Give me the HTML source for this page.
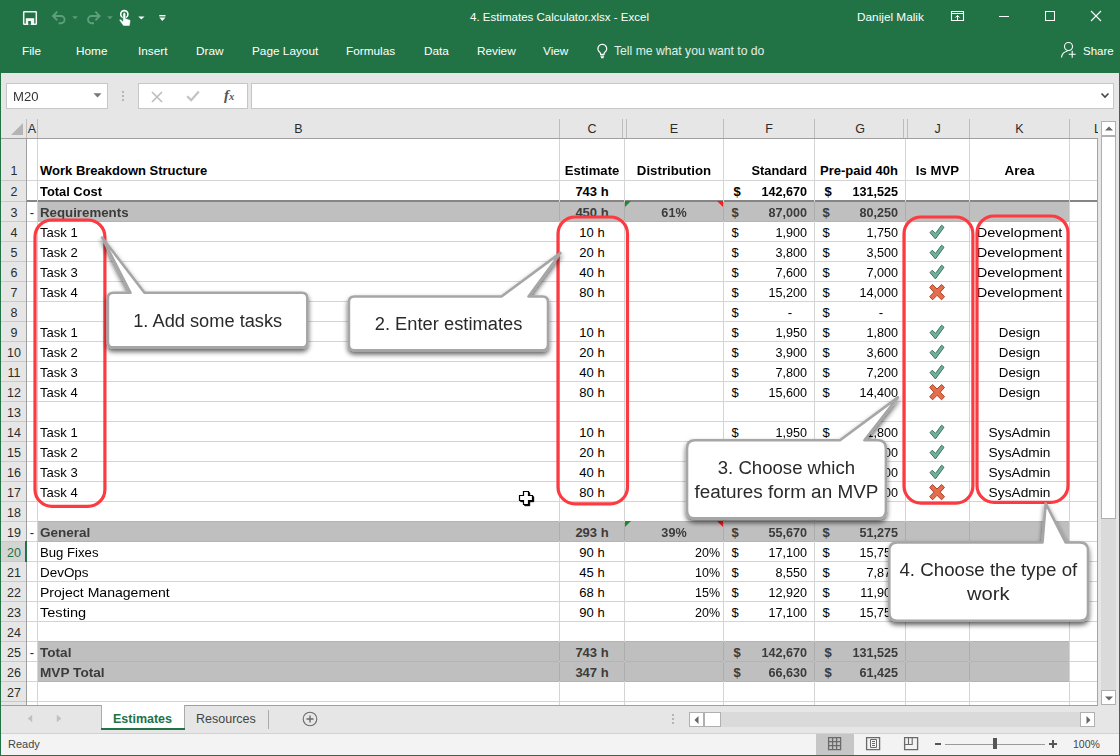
<!DOCTYPE html>
<html><head><meta charset="utf-8"><title>4. Estimates Calculator.xlsx - Excel</title>
<style>
html,body{margin:0;padding:0}
body{width:1120px;height:756px;overflow:hidden;position:relative;background:#fff;font-family:"Liberation Sans",sans-serif;color:#000}
#win{position:absolute;left:0;top:0;width:1120px;height:756px;overflow:hidden;background:#e6e6e6}
#win div,#win span,#win svg{position:absolute;white-space:nowrap}
.tb{color:#fff;font-size:11.8px;line-height:14px}
.c{font-size:13px;line-height:20px;height:20px}
.b{font-weight:bold}
.sh{color:#3b3b3b}
.rh{font-size:12.5px;line-height:20px;height:20px;color:#2b2b2b;text-align:center;left:1px;width:26px}
.ch{font-size:12.5px;line-height:20px;color:#2b2b2b;text-align:center;top:119px;height:20px}
.hl{height:1px;background:#d4d4d4;left:27px;width:1043px}
.vl{width:1px;background:#d4d4d4;top:139px;height:566px}
.red{border:2.8px solid #fb3d43;border-radius:13px;box-sizing:border-box}
.call{font-size:18px;line-height:24.2px;text-align:center;color:#2a2a2a}
</style></head><body><div id="win">

<div style="left:0;top:0;width:1120px;height:73px;background:#217346"></div>
<svg style="left:22px;top:10px" width="16" height="16" viewBox="22 10 16 16"><rect x="23.7" y="11.7" width="12.6" height="12.6" rx="0.6" fill="none" stroke="#f4f8f5" stroke-width="1.5"/><rect x="25.8" y="18.2" width="8.4" height="6.4" fill="#f4f8f5"/><rect x="28.2" y="21" width="2.7" height="3.8" fill="#217346"/></svg>
<svg style="left:50px;top:9px" width="18" height="17" viewBox="50 9 18 17"><path d="M57.2 11.6 L53 16 L57.2 20.4 M53.4 16 H61 a3.6 3.6 0 0 1 0 7.2 H58.6" fill="none" stroke="#5f9f7e" stroke-width="1.9"/></svg>
<svg style="left:85px;top:9px" width="18" height="17" viewBox="85 9 18 17"><path d="M95.4 11.6 L99.6 16 L95.4 20.4 M99.2 16 H91.6 a3.6 3.6 0 0 0 0 7.2 H94" fill="none" stroke="#5f9f7e" stroke-width="1.9"/></svg>
<svg style="left:71px;top:15px" width="8" height="5" viewBox="0 0 8 5"><path d="M1.2 1.2h5.6L4 4.2z" fill="#5d9a79"/></svg>
<svg style="left:106px;top:15px" width="8" height="5" viewBox="0 0 8 5"><path d="M1.2 1.2h5.6L4 4.2z" fill="#5d9a79"/></svg>
<svg style="left:116px;top:8px" width="17" height="20" viewBox="116 8 17 20"><circle cx="124.3" cy="14.2" r="3.6" fill="none" stroke="#fff" stroke-width="1.6"/><path d="M122.9 14 a1.4 1.4 0 0 1 2.8 0 V18.4 l3.6 1 c1 .4 1.3 1 1.1 2 L129.8 26 H123.4 L119.4 20.6 c-.5-1 .7-1.9 1.6-1 L122.9 21.2z" fill="#fff" stroke="#217346" stroke-width=".5"/></svg>
<svg style="left:138px;top:15.6px" width="7" height="4" viewBox="0 0 7 4"><path d="M0.3 0.4h6.2L3.4 3.6z" fill="#fff"/></svg>
<svg style="left:159px;top:14px" width="7" height="8" viewBox="0 0 7 8"><path d="M0.3 1.7h6.2" stroke="#fff" stroke-width="1.4"/><path d="M0.3 3.6h6.2L3.4 7z" fill="#fff"/></svg>

<div class="tb" style="left:0;width:1119px;text-align:center;top:10px;font-size:11.5px">4. Estimates Calculator.xlsx - Excel</div>
<div class="tb" style="left:857px;top:10px">Danijel Malik</div>
<svg style="left:950px;top:10px" width="16" height="13" viewBox="950 10 16 13"><path d="M951.5 11.5h12v9h-12z M951.5 13.5h12" fill="none" stroke="#fff" stroke-width="1.1"/><path d="M957.5 20.5v-5 M955.3 17.6l2.2-2.2l2.2 2.2" fill="none" stroke="#fff" stroke-width="1"/></svg>
<div style="left:999px;top:16px;width:10px;height:1px;background:#fff"></div>
<div style="left:1045px;top:11px;width:8px;height:8px;border:1px solid #fff;box-sizing:content-box"></div>
<svg style="left:1090px;top:10px" width="12" height="12" viewBox="0 0 12 12"><path d="M1 1L11 11M11 1L1 11" stroke="#fff" stroke-width="1.1"/></svg>

<div class="tb" style="left:22px;top:44px">File</div>
<div class="tb" style="left:76px;top:44px">Home</div>
<div class="tb" style="left:138px;top:44px">Insert</div>
<div class="tb" style="left:196px;top:44px">Draw</div>
<div class="tb" style="left:252px;top:44px">Page Layout</div>
<div class="tb" style="left:346px;top:44px">Formulas</div>
<div class="tb" style="left:424px;top:44px">Data</div>
<div class="tb" style="left:477px;top:44px">Review</div>
<div class="tb" style="left:543px;top:44px">View</div>
<svg style="left:596px;top:42px" width="13" height="17" viewBox="596 42 13 17"><path d="M602.3 44.2 a4.4 4.4 0 0 1 2.5 8 c-.6.5-.8 1.200-.8 2.200 H600.6 c0-1-.2-1.700-.8-2.200 A4.400 4.400 0 0 1 602.300 44.200z M600.5 56.100h3.600 M601 57.600h2.600" fill="none" stroke="#fff" stroke-width="1.15"/></svg>
<div class="tb" style="left:614px;top:44px;color:#e4efe8;font-size:12.2px">Tell me what you want to do</div>
<svg style="left:1060px;top:41px" width="18" height="18" viewBox="0 0 18 18"><circle cx="8.5" cy="5.5" r="4" fill="none" stroke="#fff" stroke-width="1.1"/><path d="M1.5 16.5 c.5-4 3-6 6-6.3" fill="none" stroke="#fff" stroke-width="1.1"/><path d="M12.2 9.8v7M8.7 13.3h7" stroke="#fff" stroke-width="1.1"/></svg>
<div class="tb" style="left:1083px;top:44px;font-size:11.5px">Share</div>
<div style="left:6px;top:83px;width:100px;height:24px;background:#fff;border:1px solid #c6c6c6;box-sizing:content-box"></div>
<div style="left:13px;top:90px;font-size:12.5px;line-height:14px;color:#333;transform:scaleX(1.05);transform-origin:left center">M20</div>
<svg style="left:93px;top:93px" width="9" height="5" viewBox="0 0 9 5"><path d="M0.5 0.2h8L4.5 4.5z" fill="#777"/></svg>
<div style="left:122px;top:91px;width:2px;height:2px;background:#b5b5b5"></div>
<div style="left:122px;top:95px;width:2px;height:2px;background:#b5b5b5"></div>
<div style="left:122px;top:99px;width:2px;height:2px;background:#b5b5b5"></div>
<div style="left:138px;top:83px;width:108px;height:24px;background:#fff;border:1px solid #c6c6c6;box-sizing:content-box"></div>
<svg style="left:151px;top:90.5px" width="12" height="12" viewBox="0 0 12 12"><path d="M1 1L11 11M11 1L1 11" stroke="#bdbdbd" stroke-width="1.6"/></svg>
<svg style="left:186px;top:90px" width="14" height="12" viewBox="0 0 14 12"><path d="M1.2 6.200L5.200 10.200L12.800 1.500" stroke="#c2c2c2" stroke-width="2.2" fill="none"/></svg>
<div style="left:224px;top:87px;font-family:'Liberation Serif',serif;font-style:italic;font-weight:bold;font-size:15px;line-height:16px;color:#555">f<span style="position:static;font-size:10.5px;font-weight:bold">x</span></div>
<div style="left:251px;top:83px;width:861px;height:24px;background:#fff;border:1px solid #c6c6c6;box-sizing:content-box"></div>
<svg style="left:1100px;top:92px" width="10" height="7" viewBox="0 0 10 7"><path d="M1.5 1.5L5 5L8.5 1.5" stroke="#444" stroke-width="1.6" fill="none"/></svg>
<div style="left:27px;top:139px;width:1071px;height:566px;background:#fff"></div>
<div style="left:38px;top:202px;width:1032px;height:19px;background:#bfbfbf"></div>
<div style="left:38px;top:522px;width:1032px;height:19px;background:#bfbfbf"></div>
<div style="left:38px;top:642px;width:1032px;height:19px;background:#bfbfbf"></div>
<div style="left:38px;top:662px;width:1032px;height:19px;background:#bfbfbf"></div>
<div class="hl" style="top:180px;width:1071px"></div>
<div class="hl" style="top:201px;width:1071px"></div>
<div class="hl" style="top:221px;width:1071px"></div>
<div class="hl" style="top:241px;width:1071px"></div>
<div class="hl" style="top:261px;width:1071px"></div>
<div class="hl" style="top:281px;width:1071px"></div>
<div class="hl" style="top:301px;width:1071px"></div>
<div class="hl" style="top:321px;width:1071px"></div>
<div class="hl" style="top:341px;width:1071px"></div>
<div class="hl" style="top:361px;width:1071px"></div>
<div class="hl" style="top:381px;width:1071px"></div>
<div class="hl" style="top:401px;width:1071px"></div>
<div class="hl" style="top:421px;width:1071px"></div>
<div class="hl" style="top:441px;width:1071px"></div>
<div class="hl" style="top:461px;width:1071px"></div>
<div class="hl" style="top:481px;width:1071px"></div>
<div class="hl" style="top:501px;width:1071px"></div>
<div class="hl" style="top:521px;width:1071px"></div>
<div class="hl" style="top:541px;width:1071px"></div>
<div class="hl" style="top:561px;width:1071px"></div>
<div class="hl" style="top:581px;width:1071px"></div>
<div class="hl" style="top:601px;width:1071px"></div>
<div class="hl" style="top:621px;width:1071px"></div>
<div class="hl" style="top:641px;width:1071px"></div>
<div class="hl" style="top:661px;width:1071px"></div>
<div class="hl" style="top:681px;width:1071px"></div>
<div class="hl" style="top:701px;width:1071px"></div>
<div style="left:38px;top:221px;width:1032px;height:1px;background:#b4b4b4"></div>
<div style="left:38px;top:541px;width:1032px;height:1px;background:#b4b4b4"></div>
<div style="left:38px;top:661px;width:1032px;height:1px;background:#b4b4b4"></div>
<div style="left:38px;top:681px;width:1032px;height:1px;background:#b4b4b4"></div>
<div style="left:38px;top:521px;width:1032px;height:1px;background:#b4b4b4"></div>
<div style="left:38px;top:641px;width:1032px;height:1px;background:#b4b4b4"></div>
<div style="left:27px;top:200px;width:1071px;height:2px;background:#858585"></div>
<div class="vl" style="left:37px"></div>
<div class="vl" style="left:559px"></div>
<div class="vl" style="left:624px"></div>
<div class="vl" style="left:723px"></div>
<div class="vl" style="left:814px"></div>
<div class="vl" style="left:905px"></div>
<div class="vl" style="left:969px"></div>
<div class="vl" style="left:1069px"></div>
<div style="left:559px;top:202px;width:1px;height:19px;background:#adadad"></div>
<div style="left:624px;top:202px;width:1px;height:19px;background:#adadad"></div>
<div style="left:723px;top:202px;width:1px;height:19px;background:#adadad"></div>
<div style="left:814px;top:202px;width:1px;height:19px;background:#adadad"></div>
<div style="left:905px;top:202px;width:1px;height:19px;background:#adadad"></div>
<div style="left:969px;top:202px;width:1px;height:19px;background:#adadad"></div>
<div style="left:559px;top:522px;width:1px;height:19px;background:#adadad"></div>
<div style="left:624px;top:522px;width:1px;height:19px;background:#adadad"></div>
<div style="left:723px;top:522px;width:1px;height:19px;background:#adadad"></div>
<div style="left:814px;top:522px;width:1px;height:19px;background:#adadad"></div>
<div style="left:905px;top:522px;width:1px;height:19px;background:#adadad"></div>
<div style="left:969px;top:522px;width:1px;height:19px;background:#adadad"></div>
<div style="left:559px;top:642px;width:1px;height:19px;background:#adadad"></div>
<div style="left:624px;top:642px;width:1px;height:19px;background:#adadad"></div>
<div style="left:723px;top:642px;width:1px;height:19px;background:#adadad"></div>
<div style="left:814px;top:642px;width:1px;height:19px;background:#adadad"></div>
<div style="left:905px;top:642px;width:1px;height:19px;background:#adadad"></div>
<div style="left:969px;top:642px;width:1px;height:19px;background:#adadad"></div>
<div style="left:559px;top:662px;width:1px;height:19px;background:#adadad"></div>
<div style="left:624px;top:662px;width:1px;height:19px;background:#adadad"></div>
<div style="left:723px;top:662px;width:1px;height:19px;background:#adadad"></div>
<div style="left:814px;top:662px;width:1px;height:19px;background:#adadad"></div>
<div style="left:905px;top:662px;width:1px;height:19px;background:#adadad"></div>
<div style="left:969px;top:662px;width:1px;height:19px;background:#adadad"></div>
<div style="left:1px;top:117px;width:1097px;height:21px;background:#e6e6e6"></div>
<div style="left:1px;top:138px;width:1097px;height:1px;background:#9f9f9f"></div>
<svg style="left:11px;top:123px" width="12" height="12" viewBox="0 0 12 12"><path d="M12 0V12H0z" fill="#b4b4b4"/></svg>
<div style="left:26px;top:119px;width:1px;height:19px;background:#bdbdbd"></div>
<div style="left:37px;top:119px;width:1px;height:19px;background:#bdbdbd"></div>
<div style="left:559px;top:119px;width:1px;height:19px;background:#bdbdbd"></div>
<div style="left:622px;top:119px;width:1px;height:19px;background:#bdbdbd"></div>
<div style="left:626px;top:119px;width:1px;height:19px;background:#bdbdbd"></div>
<div style="left:723px;top:119px;width:1px;height:19px;background:#bdbdbd"></div>
<div style="left:814px;top:119px;width:1px;height:19px;background:#bdbdbd"></div>
<div style="left:903px;top:119px;width:1px;height:19px;background:#bdbdbd"></div>
<div style="left:907px;top:119px;width:1px;height:19px;background:#bdbdbd"></div>
<div style="left:969px;top:119px;width:1px;height:19px;background:#bdbdbd"></div>
<div style="left:1069px;top:119px;width:1px;height:19px;background:#bdbdbd"></div>
<div class="ch" style="left:27px;width:10px">A</div>
<div class="ch" style="left:38px;width:521px">B</div>
<div class="ch" style="left:560px;width:64px">C</div>
<div class="ch" style="left:625px;width:98px">E</div>
<div class="ch" style="left:724px;width:90px">F</div>
<div class="ch" style="left:815px;width:90px">G</div>
<div class="ch" style="left:906px;width:63px">J</div>
<div class="ch" style="left:970px;width:99px">K</div>
<div class="ch" style="left:1094px;width:4px;overflow:hidden;text-align:left">L</div>
<div style="left:1px;top:139px;width:25px;height:566px;background:#e6e6e6"></div>
<div style="left:26px;top:139px;width:1px;height:566px;background:#9f9f9f"></div>
<div style="left:1px;top:180px;width:25px;height:1px;background:#c9c9c9"></div>
<div class="rh" style="top:161px">1</div>
<div style="left:1px;top:201px;width:25px;height:1px;background:#c9c9c9"></div>
<div class="rh" style="top:182px">2</div>
<div style="left:1px;top:221px;width:25px;height:1px;background:#c9c9c9"></div>
<div class="rh" style="top:203px">3</div>
<div style="left:1px;top:241px;width:25px;height:1px;background:#c9c9c9"></div>
<div class="rh" style="top:223px">4</div>
<div style="left:1px;top:261px;width:25px;height:1px;background:#c9c9c9"></div>
<div class="rh" style="top:243px">5</div>
<div style="left:1px;top:281px;width:25px;height:1px;background:#c9c9c9"></div>
<div class="rh" style="top:263px">6</div>
<div style="left:1px;top:301px;width:25px;height:1px;background:#c9c9c9"></div>
<div class="rh" style="top:283px">7</div>
<div style="left:1px;top:321px;width:25px;height:1px;background:#c9c9c9"></div>
<div class="rh" style="top:303px">8</div>
<div style="left:1px;top:341px;width:25px;height:1px;background:#c9c9c9"></div>
<div class="rh" style="top:323px">9</div>
<div style="left:1px;top:361px;width:25px;height:1px;background:#c9c9c9"></div>
<div class="rh" style="top:343px">10</div>
<div style="left:1px;top:381px;width:25px;height:1px;background:#c9c9c9"></div>
<div class="rh" style="top:363px">11</div>
<div style="left:1px;top:401px;width:25px;height:1px;background:#c9c9c9"></div>
<div class="rh" style="top:383px">12</div>
<div style="left:1px;top:421px;width:25px;height:1px;background:#c9c9c9"></div>
<div class="rh" style="top:403px">13</div>
<div style="left:1px;top:441px;width:25px;height:1px;background:#c9c9c9"></div>
<div class="rh" style="top:423px">14</div>
<div style="left:1px;top:461px;width:25px;height:1px;background:#c9c9c9"></div>
<div class="rh" style="top:443px">15</div>
<div style="left:1px;top:481px;width:25px;height:1px;background:#c9c9c9"></div>
<div class="rh" style="top:463px">16</div>
<div style="left:1px;top:501px;width:25px;height:1px;background:#c9c9c9"></div>
<div class="rh" style="top:483px">17</div>
<div style="left:1px;top:521px;width:25px;height:1px;background:#c9c9c9"></div>
<div class="rh" style="top:503px">18</div>
<div style="left:1px;top:541px;width:25px;height:1px;background:#c9c9c9"></div>
<div class="rh" style="top:523px">19</div>
<div style="left:1px;top:561px;width:25px;height:1px;background:#c9c9c9"></div>
<div style="left:1px;top:542px;width:25px;height:19px;background:#d4d4d4"></div>
<div style="left:25px;top:541px;width:2px;height:21px;background:#217346"></div>
<div class="rh" style="top:543px;color:#217346">20</div>
<div style="left:1px;top:581px;width:25px;height:1px;background:#c9c9c9"></div>
<div class="rh" style="top:563px">21</div>
<div style="left:1px;top:601px;width:25px;height:1px;background:#c9c9c9"></div>
<div class="rh" style="top:583px">22</div>
<div style="left:1px;top:621px;width:25px;height:1px;background:#c9c9c9"></div>
<div class="rh" style="top:603px">23</div>
<div style="left:1px;top:641px;width:25px;height:1px;background:#c9c9c9"></div>
<div class="rh" style="top:623px">24</div>
<div style="left:1px;top:661px;width:25px;height:1px;background:#c9c9c9"></div>
<div class="rh" style="top:643px">25</div>
<div style="left:1px;top:681px;width:25px;height:1px;background:#c9c9c9"></div>
<div class="rh" style="top:663px">26</div>
<div style="left:1px;top:701px;width:25px;height:1px;background:#c9c9c9"></div>
<div class="rh" style="top:683px">27</div>
<div class="c b" style="left:40px;top:161px;transform:scaleX(1.0);transform-origin:left center">Work Breakdown Structure</div>
<div class="c b" style="left:560px;width:64px;top:161px;text-align:center;transform:scaleX(1.007);transform-origin:center center">Estimate</div>
<div class="c b" style="left:625px;width:98px;top:161px;text-align:center;transform:scaleX(1.018);transform-origin:center center">Distribution</div>
<div class="c b" style="left:724px;width:83px;top:161px;text-align:right;transform:scaleX(0.985);transform-origin:right center">Standard</div>
<div class="c b" style="left:815px;width:83px;top:161px;text-align:right;transform:scaleX(1.0);transform-origin:right center">Pre-paid 40h</div>
<div class="c b" style="left:906px;width:63px;top:161px;text-align:center;transform:scaleX(1.016);transform-origin:center center">Is MVP</div>
<div class="c b" style="left:970px;width:99px;top:161px;text-align:center;transform:scaleX(1.039);transform-origin:center center">Area</div>
<div class="c b" style="left:40px;top:182px;transform:scaleX(0.99);transform-origin:left center">Total Cost</div>
<div class="c b" style="left:560px;width:64px;top:182px;text-align:center">743 h</div>
<div class="c b" style="left:733.5px;top:182px">$</div>
<div class="c b" style="left:724px;width:83px;top:182px;text-align:right;transform:scaleX(.97);transform-origin:right center">142,670</div>
<div class="c b" style="left:824.5px;top:182px">$</div>
<div class="c b" style="left:815px;width:83px;top:182px;text-align:right;transform:scaleX(.97);transform-origin:right center">131,525</div>
<div class="c" style="left:27px;width:10px;top:203px;text-align:center;color:#222">-</div>
<div class="c b sh" style="left:40px;top:203px;transform:scaleX(1.021);transform-origin:left center">Requirements</div>
<div class="c b sh" style="left:560px;width:64px;top:203px;text-align:center">450 h</div>
<div class="c b sh" style="left:625px;width:98px;top:203px;text-align:center;transform:scaleX(0.971);transform-origin:center center">61%</div>
<div class="c b sh" style="left:731.5px;top:203px">$</div>
<div class="c b sh" style="left:724px;width:83px;top:203px;text-align:right;transform:scaleX(.97);transform-origin:right center">87,000</div>
<div class="c b sh" style="left:822.5px;top:203px">$</div>
<div class="c b sh" style="left:815px;width:83px;top:203px;text-align:right;transform:scaleX(.97);transform-origin:right center">80,250</div>
<div class="c" style="left:40px;top:223px;transform:scaleX(1.006);transform-origin:left center">Task 1</div>
<div class="c" style="left:560px;width:64px;top:223px;text-align:center">10 h</div>
<div class="c" style="left:731.5px;top:223px">$</div>
<div class="c" style="left:724px;width:83px;top:223px;text-align:right;transform:scaleX(.97);transform-origin:right center">1,900</div>
<div class="c" style="left:822.5px;top:223px">$</div>
<div class="c" style="left:815px;width:83px;top:223px;text-align:right;transform:scaleX(.97);transform-origin:right center">1,750</div>
<svg style="left:928px;top:222px" width="18" height="20" viewBox="0 0 18 20"><path d="M4.3 8.2 L7.5 11.4 L13.6 3.2 L16 5.3 L7.4 16.9 L2 10.6z" fill="#72b09a" stroke="#357560" stroke-width="1" stroke-linejoin="round"/></svg>
<div class="c" style="left:970px;width:99px;top:223px;text-align:center;transform:scaleX(1.116);transform-origin:center center">Development</div>
<div class="c" style="left:40px;top:243px;transform:scaleX(1.006);transform-origin:left center">Task 2</div>
<div class="c" style="left:560px;width:64px;top:243px;text-align:center">20 h</div>
<div class="c" style="left:731.5px;top:243px">$</div>
<div class="c" style="left:724px;width:83px;top:243px;text-align:right;transform:scaleX(.97);transform-origin:right center">3,800</div>
<div class="c" style="left:822.5px;top:243px">$</div>
<div class="c" style="left:815px;width:83px;top:243px;text-align:right;transform:scaleX(.97);transform-origin:right center">3,500</div>
<svg style="left:928px;top:242px" width="18" height="20" viewBox="0 0 18 20"><path d="M4.3 8.2 L7.5 11.4 L13.6 3.2 L16 5.3 L7.4 16.9 L2 10.6z" fill="#72b09a" stroke="#357560" stroke-width="1" stroke-linejoin="round"/></svg>
<div class="c" style="left:970px;width:99px;top:243px;text-align:center;transform:scaleX(1.116);transform-origin:center center">Development</div>
<div class="c" style="left:40px;top:263px;transform:scaleX(1.006);transform-origin:left center">Task 3</div>
<div class="c" style="left:560px;width:64px;top:263px;text-align:center">40 h</div>
<div class="c" style="left:731.5px;top:263px">$</div>
<div class="c" style="left:724px;width:83px;top:263px;text-align:right;transform:scaleX(.97);transform-origin:right center">7,600</div>
<div class="c" style="left:822.5px;top:263px">$</div>
<div class="c" style="left:815px;width:83px;top:263px;text-align:right;transform:scaleX(.97);transform-origin:right center">7,000</div>
<svg style="left:928px;top:262px" width="18" height="20" viewBox="0 0 18 20"><path d="M4.3 8.2 L7.5 11.4 L13.6 3.2 L16 5.3 L7.4 16.9 L2 10.6z" fill="#72b09a" stroke="#357560" stroke-width="1" stroke-linejoin="round"/></svg>
<div class="c" style="left:970px;width:99px;top:263px;text-align:center;transform:scaleX(1.116);transform-origin:center center">Development</div>
<div class="c" style="left:40px;top:283px;transform:scaleX(1.006);transform-origin:left center">Task 4</div>
<div class="c" style="left:560px;width:64px;top:283px;text-align:center">80 h</div>
<div class="c" style="left:731.5px;top:283px">$</div>
<div class="c" style="left:724px;width:83px;top:283px;text-align:right;transform:scaleX(.97);transform-origin:right center">15,200</div>
<div class="c" style="left:822.5px;top:283px">$</div>
<div class="c" style="left:815px;width:83px;top:283px;text-align:right;transform:scaleX(.97);transform-origin:right center">14,000</div>
<svg style="left:928px;top:282px" width="18" height="20" viewBox="0 0 18 20"><path d="M4.6 2.5 L1.7 5.4 L5.9 10.2 L1.7 14.7 L4.6 17.8 L9 13.3 L13.6 17.8 L16.5 14.7 L12.2 10.2 L16.5 5.4 L13.6 2.5 L9 7z" fill="#e36d4d" stroke="#b04226" stroke-width="1" stroke-linejoin="round"/></svg>
<div class="c" style="left:970px;width:99px;top:283px;text-align:center;transform:scaleX(1.116);transform-origin:center center">Development</div>
<div class="c" style="left:731.5px;top:303px">$</div>
<div class="c" style="left:724px;width:68px;top:303px;text-align:right">-</div>
<div class="c" style="left:822.5px;top:303px">$</div>
<div class="c" style="left:815px;width:68px;top:303px;text-align:right">-</div>
<div class="c" style="left:40px;top:323px;transform:scaleX(1.006);transform-origin:left center">Task 1</div>
<div class="c" style="left:560px;width:64px;top:323px;text-align:center">10 h</div>
<div class="c" style="left:731.5px;top:323px">$</div>
<div class="c" style="left:724px;width:83px;top:323px;text-align:right;transform:scaleX(.97);transform-origin:right center">1,950</div>
<div class="c" style="left:822.5px;top:323px">$</div>
<div class="c" style="left:815px;width:83px;top:323px;text-align:right;transform:scaleX(.97);transform-origin:right center">1,800</div>
<svg style="left:928px;top:322px" width="18" height="20" viewBox="0 0 18 20"><path d="M4.3 8.2 L7.5 11.4 L13.6 3.2 L16 5.3 L7.4 16.9 L2 10.6z" fill="#72b09a" stroke="#357560" stroke-width="1" stroke-linejoin="round"/></svg>
<div class="c" style="left:970px;width:99px;top:323px;text-align:center;transform:scaleX(1.024);transform-origin:center center">Design</div>
<div class="c" style="left:40px;top:343px;transform:scaleX(1.006);transform-origin:left center">Task 2</div>
<div class="c" style="left:560px;width:64px;top:343px;text-align:center">20 h</div>
<div class="c" style="left:731.5px;top:343px">$</div>
<div class="c" style="left:724px;width:83px;top:343px;text-align:right;transform:scaleX(.97);transform-origin:right center">3,900</div>
<div class="c" style="left:822.5px;top:343px">$</div>
<div class="c" style="left:815px;width:83px;top:343px;text-align:right;transform:scaleX(.97);transform-origin:right center">3,600</div>
<svg style="left:928px;top:342px" width="18" height="20" viewBox="0 0 18 20"><path d="M4.3 8.2 L7.5 11.4 L13.6 3.2 L16 5.3 L7.4 16.9 L2 10.6z" fill="#72b09a" stroke="#357560" stroke-width="1" stroke-linejoin="round"/></svg>
<div class="c" style="left:970px;width:99px;top:343px;text-align:center;transform:scaleX(1.024);transform-origin:center center">Design</div>
<div class="c" style="left:40px;top:363px;transform:scaleX(1.006);transform-origin:left center">Task 3</div>
<div class="c" style="left:560px;width:64px;top:363px;text-align:center">40 h</div>
<div class="c" style="left:731.5px;top:363px">$</div>
<div class="c" style="left:724px;width:83px;top:363px;text-align:right;transform:scaleX(.97);transform-origin:right center">7,800</div>
<div class="c" style="left:822.5px;top:363px">$</div>
<div class="c" style="left:815px;width:83px;top:363px;text-align:right;transform:scaleX(.97);transform-origin:right center">7,200</div>
<svg style="left:928px;top:362px" width="18" height="20" viewBox="0 0 18 20"><path d="M4.3 8.2 L7.5 11.4 L13.6 3.2 L16 5.3 L7.4 16.9 L2 10.6z" fill="#72b09a" stroke="#357560" stroke-width="1" stroke-linejoin="round"/></svg>
<div class="c" style="left:970px;width:99px;top:363px;text-align:center;transform:scaleX(1.024);transform-origin:center center">Design</div>
<div class="c" style="left:40px;top:383px;transform:scaleX(1.006);transform-origin:left center">Task 4</div>
<div class="c" style="left:560px;width:64px;top:383px;text-align:center">80 h</div>
<div class="c" style="left:731.5px;top:383px">$</div>
<div class="c" style="left:724px;width:83px;top:383px;text-align:right;transform:scaleX(.97);transform-origin:right center">15,600</div>
<div class="c" style="left:822.5px;top:383px">$</div>
<div class="c" style="left:815px;width:83px;top:383px;text-align:right;transform:scaleX(.97);transform-origin:right center">14,400</div>
<svg style="left:928px;top:382px" width="18" height="20" viewBox="0 0 18 20"><path d="M4.6 2.5 L1.7 5.4 L5.9 10.2 L1.7 14.7 L4.6 17.8 L9 13.3 L13.6 17.8 L16.5 14.7 L12.2 10.2 L16.5 5.4 L13.6 2.5 L9 7z" fill="#e36d4d" stroke="#b04226" stroke-width="1" stroke-linejoin="round"/></svg>
<div class="c" style="left:970px;width:99px;top:383px;text-align:center;transform:scaleX(1.024);transform-origin:center center">Design</div>
<div class="c" style="left:40px;top:423px;transform:scaleX(1.006);transform-origin:left center">Task 1</div>
<div class="c" style="left:560px;width:64px;top:423px;text-align:center">10 h</div>
<div class="c" style="left:731.5px;top:423px">$</div>
<div class="c" style="left:724px;width:83px;top:423px;text-align:right;transform:scaleX(.97);transform-origin:right center">1,950</div>
<div class="c" style="left:822.5px;top:423px">$</div>
<div class="c" style="left:815px;width:83px;top:423px;text-align:right;transform:scaleX(.97);transform-origin:right center">1,800</div>
<svg style="left:928px;top:422px" width="18" height="20" viewBox="0 0 18 20"><path d="M4.3 8.2 L7.5 11.4 L13.6 3.2 L16 5.3 L7.4 16.9 L2 10.6z" fill="#72b09a" stroke="#357560" stroke-width="1" stroke-linejoin="round"/></svg>
<div class="c" style="left:970px;width:99px;top:423px;text-align:center;transform:scaleX(1.055);transform-origin:center center">SysAdmin</div>
<div class="c" style="left:40px;top:443px;transform:scaleX(1.006);transform-origin:left center">Task 2</div>
<div class="c" style="left:560px;width:64px;top:443px;text-align:center">20 h</div>
<div class="c" style="left:731.5px;top:443px">$</div>
<div class="c" style="left:724px;width:83px;top:443px;text-align:right;transform:scaleX(.97);transform-origin:right center">3,900</div>
<div class="c" style="left:822.5px;top:443px">$</div>
<div class="c" style="left:815px;width:83px;top:443px;text-align:right;transform:scaleX(.97);transform-origin:right center">3,600</div>
<svg style="left:928px;top:442px" width="18" height="20" viewBox="0 0 18 20"><path d="M4.3 8.2 L7.5 11.4 L13.6 3.2 L16 5.3 L7.4 16.9 L2 10.6z" fill="#72b09a" stroke="#357560" stroke-width="1" stroke-linejoin="round"/></svg>
<div class="c" style="left:970px;width:99px;top:443px;text-align:center;transform:scaleX(1.055);transform-origin:center center">SysAdmin</div>
<div class="c" style="left:40px;top:463px;transform:scaleX(1.006);transform-origin:left center">Task 3</div>
<div class="c" style="left:560px;width:64px;top:463px;text-align:center">40 h</div>
<div class="c" style="left:731.5px;top:463px">$</div>
<div class="c" style="left:724px;width:83px;top:463px;text-align:right;transform:scaleX(.97);transform-origin:right center">7,800</div>
<div class="c" style="left:822.5px;top:463px">$</div>
<div class="c" style="left:815px;width:83px;top:463px;text-align:right;transform:scaleX(.97);transform-origin:right center">7,200</div>
<svg style="left:928px;top:462px" width="18" height="20" viewBox="0 0 18 20"><path d="M4.3 8.2 L7.5 11.4 L13.6 3.2 L16 5.3 L7.4 16.9 L2 10.6z" fill="#72b09a" stroke="#357560" stroke-width="1" stroke-linejoin="round"/></svg>
<div class="c" style="left:970px;width:99px;top:463px;text-align:center;transform:scaleX(1.055);transform-origin:center center">SysAdmin</div>
<div class="c" style="left:40px;top:483px;transform:scaleX(1.006);transform-origin:left center">Task 4</div>
<div class="c" style="left:560px;width:64px;top:483px;text-align:center">80 h</div>
<div class="c" style="left:731.5px;top:483px">$</div>
<div class="c" style="left:724px;width:83px;top:483px;text-align:right;transform:scaleX(.97);transform-origin:right center">15,600</div>
<div class="c" style="left:822.5px;top:483px">$</div>
<div class="c" style="left:815px;width:83px;top:483px;text-align:right;transform:scaleX(.97);transform-origin:right center">14,400</div>
<svg style="left:928px;top:482px" width="18" height="20" viewBox="0 0 18 20"><path d="M4.6 2.5 L1.7 5.4 L5.9 10.2 L1.7 14.7 L4.6 17.8 L9 13.3 L13.6 17.8 L16.5 14.7 L12.2 10.2 L16.5 5.4 L13.6 2.5 L9 7z" fill="#e36d4d" stroke="#b04226" stroke-width="1" stroke-linejoin="round"/></svg>
<div class="c" style="left:970px;width:99px;top:483px;text-align:center;transform:scaleX(1.055);transform-origin:center center">SysAdmin</div>
<div class="c" style="left:27px;width:10px;top:523px;text-align:center;color:#222">-</div>
<div class="c b sh" style="left:40px;top:523px;transform:scaleX(1.04);transform-origin:left center">General</div>
<div class="c b sh" style="left:560px;width:64px;top:523px;text-align:center">293 h</div>
<div class="c b sh" style="left:625px;width:98px;top:523px;text-align:center;transform:scaleX(0.971);transform-origin:center center">39%</div>
<div class="c b sh" style="left:731.5px;top:523px">$</div>
<div class="c b sh" style="left:724px;width:83px;top:523px;text-align:right;transform:scaleX(.97);transform-origin:right center">55,670</div>
<div class="c b sh" style="left:822.5px;top:523px">$</div>
<div class="c b sh" style="left:815px;width:83px;top:523px;text-align:right;transform:scaleX(.97);transform-origin:right center">51,275</div>
<div class="c" style="left:40px;top:543px;transform:scaleX(1.012);transform-origin:left center">Bug Fixes</div>
<div class="c" style="left:560px;width:64px;top:543px;text-align:center">90 h</div>
<div class="c" style="left:625px;width:95px;top:543px;text-align:right;transform:scaleX(0.959);transform-origin:right center">20%</div>
<div class="c" style="left:731.5px;top:543px">$</div>
<div class="c" style="left:724px;width:83px;top:543px;text-align:right;transform:scaleX(.97);transform-origin:right center">17,100</div>
<div class="c" style="left:822.5px;top:543px">$</div>
<div class="c" style="left:815px;width:83px;top:543px;text-align:right;transform:scaleX(.97);transform-origin:right center">15,750</div>
<div class="c" style="left:40px;top:563px;transform:scaleX(1.033);transform-origin:left center">DevOps</div>
<div class="c" style="left:560px;width:64px;top:563px;text-align:center">45 h</div>
<div class="c" style="left:625px;width:95px;top:563px;text-align:right;transform:scaleX(0.959);transform-origin:right center">10%</div>
<div class="c" style="left:731.5px;top:563px">$</div>
<div class="c" style="left:724px;width:83px;top:563px;text-align:right;transform:scaleX(.97);transform-origin:right center">8,550</div>
<div class="c" style="left:822.5px;top:563px">$</div>
<div class="c" style="left:815px;width:83px;top:563px;text-align:right;transform:scaleX(.97);transform-origin:right center">7,875</div>
<div class="c" style="left:40px;top:583px;transform:scaleX(1.081);transform-origin:left center">Project Management</div>
<div class="c" style="left:560px;width:64px;top:583px;text-align:center">68 h</div>
<div class="c" style="left:625px;width:95px;top:583px;text-align:right;transform:scaleX(0.959);transform-origin:right center">15%</div>
<div class="c" style="left:731.5px;top:583px">$</div>
<div class="c" style="left:724px;width:83px;top:583px;text-align:right;transform:scaleX(.97);transform-origin:right center">12,920</div>
<div class="c" style="left:822.5px;top:583px">$</div>
<div class="c" style="left:815px;width:83px;top:583px;text-align:right;transform:scaleX(.97);transform-origin:right center">11,900</div>
<div class="c" style="left:40px;top:603px;transform:scaleX(1.119);transform-origin:left center">Testing</div>
<div class="c" style="left:560px;width:64px;top:603px;text-align:center">90 h</div>
<div class="c" style="left:625px;width:95px;top:603px;text-align:right;transform:scaleX(0.959);transform-origin:right center">20%</div>
<div class="c" style="left:731.5px;top:603px">$</div>
<div class="c" style="left:724px;width:83px;top:603px;text-align:right;transform:scaleX(.97);transform-origin:right center">17,100</div>
<div class="c" style="left:822.5px;top:603px">$</div>
<div class="c" style="left:815px;width:83px;top:603px;text-align:right;transform:scaleX(.97);transform-origin:right center">15,750</div>
<div class="c" style="left:27px;width:10px;top:643px;text-align:center;color:#222">-</div>
<div class="c b sh" style="left:40px;top:643px;transform:scaleX(1.045);transform-origin:left center">Total</div>
<div class="c b sh" style="left:560px;width:64px;top:643px;text-align:center">743 h</div>
<div class="c b sh" style="left:733.5px;top:643px">$</div>
<div class="c b sh" style="left:724px;width:83px;top:643px;text-align:right;transform:scaleX(.97);transform-origin:right center">142,670</div>
<div class="c b sh" style="left:824.5px;top:643px">$</div>
<div class="c b sh" style="left:815px;width:83px;top:643px;text-align:right;transform:scaleX(.97);transform-origin:right center">131,525</div>
<div class="c b sh" style="left:40px;top:663px;transform:scaleX(1.049);transform-origin:left center">MVP Total</div>
<div class="c b sh" style="left:560px;width:64px;top:663px;text-align:center">347 h</div>
<div class="c b sh" style="left:733.5px;top:663px">$</div>
<div class="c b sh" style="left:724px;width:83px;top:663px;text-align:right;transform:scaleX(.97);transform-origin:right center">66,630</div>
<div class="c b sh" style="left:824.5px;top:663px">$</div>
<div class="c b sh" style="left:815px;width:83px;top:663px;text-align:right;transform:scaleX(.97);transform-origin:right center">61,425</div>
<svg style="left:625px;top:201px" width="6" height="6"><path d="M0 0H6L0 6z" fill="#1e8a2e"/></svg>
<svg style="left:717px;top:201px" width="6" height="6"><path d="M0 0H6V6z" fill="#ff1a1a"/></svg>
<svg style="left:625px;top:521px" width="6" height="6"><path d="M0 0H6L0 6z" fill="#1e8a2e"/></svg>
<svg style="left:717px;top:521px" width="6" height="6"><path d="M0 0H6V6z" fill="#ff1a1a"/></svg>
<div style="left:1097px;top:139px;width:1px;height:566px;background:#a5a5a5"></div>
<div style="left:1px;top:705px;width:1097px;height:1px;background:#9f9f9f"></div>
<div style="left:1098px;top:117px;width:21px;height:615px;background:#e6e6e6"></div>
<div style="left:1101px;top:136px;width:15px;height:555px;background:#dadada"></div>
<div style="left:1101px;top:136px;width:15px;height:383px;background:#fff;border:1px solid #b0b0b0;box-sizing:border-box"></div>
<div style="left:1101px;top:121px;width:15px;height:15px;background:#fff;border:1px solid #b0b0b0;box-sizing:border-box"></div>
<svg style="left:1105px;top:126px" width="8" height="5"><path d="M0 4.5H8L4 0.5z" fill="#666"/></svg>
<div style="left:1101px;top:690px;width:15px;height:15px;background:#fff;border:1px solid #b0b0b0;box-sizing:border-box"></div>
<svg style="left:1105px;top:696px" width="8" height="5"><path d="M0 0.5H8L4 4.5z" fill="#666"/></svg>
<div style="left:1px;top:706px;width:1097px;height:27px;background:#e6e6e6"></div>
<svg style="left:27px;top:714px" width="6" height="9"><path d="M5.2 0.8V8.200L0.600 4.500z" fill="#c0c0c0"/></svg>
<svg style="left:56px;top:714px" width="6" height="9"><path d="M0.8 0.8V8.200L5.400 4.500z" fill="#c0c0c0"/></svg>
<div style="left:101px;top:705px;width:84px;height:23px;background:#fff;border-left:1px solid #ababab;border-right:1px solid #ababab;box-sizing:border-box"></div>
<div style="left:101px;top:728px;width:84px;height:2px;background:#217346"></div>
<div style="left:101px;top:708px;width:83px;text-align:center;font-size:12.5px;font-weight:bold;line-height:22px;color:#217346">Estimates</div>
<div style="left:196px;top:708px;font-size:12.5px;line-height:22px;color:#444">Resources</div>
<div style="left:268px;top:710px;width:1px;height:19px;background:#ababab"></div>
<svg style="left:302px;top:711px" width="16" height="16" viewBox="0 0 16 16"><circle cx="8" cy="8" r="6.8" fill="none" stroke="#6a6a6a" stroke-width="1.1"/><path d="M8 4.5v7M4.5 8h7" stroke="#6a6a6a" stroke-width="1.4"/></svg>
<div style="left:672px;top:714px;width:2px;height:2px;background:#b5b5b5"></div>
<div style="left:672px;top:718px;width:2px;height:2px;background:#b5b5b5"></div>
<div style="left:672px;top:722px;width:2px;height:2px;background:#b5b5b5"></div>
<div style="left:689px;top:712px;width:406px;height:15px;background:#dadada"></div>
<div style="left:689px;top:712px;width:15px;height:15px;background:#fff;border:1px solid #b0b0b0;box-sizing:border-box"></div>
<svg style="left:694px;top:715.5px" width="5" height="8"><path d="M4.5 0V8L0.5 4z" fill="#666"/></svg>
<div style="left:704px;top:712px;width:17px;height:15px;background:#fff;border:1px solid #b0b0b0;box-sizing:border-box"></div>
<div style="left:1080px;top:712px;width:15px;height:15px;background:#fff;border:1px solid #b0b0b0;box-sizing:border-box"></div>
<svg style="left:1086px;top:715.5px" width="5" height="8"><path d="M0.5 0V8L4.5 4z" fill="#666"/></svg>
<div style="left:1px;top:733px;width:1118px;height:22px;background:#f3f3f3"></div>
<div style="left:1px;top:733px;width:1118px;height:1px;background:#d2d2d2"></div>
<div style="left:8px;top:737px;font-size:11px;line-height:14px;color:#444">Ready</div>
<div style="left:816px;top:734px;width:38px;height:21px;background:#c6c6c6"></div>
<svg style="left:827px;top:736px" width="16" height="15" viewBox="827 736 16 15"><path d="M828.6 737.6h12v12h-12z M832.6 737.6v12 M836.6 737.6v12 M828.6 741.6h12 M828.6 745.6h12" fill="none" stroke="#6a6a6a" stroke-width="1.3"/></svg>
<svg style="left:865px;top:736px" width="16" height="15" viewBox="865 736 16 15"><path d="M866.6 737.6h13v12h-13z" fill="none" stroke="#6a6a6a" stroke-width="1.3"/><path d="M870.5 739.5h6v8h-6z M872 741.500h3 M872 743.500h3 M872 745.500h3" fill="none" stroke="#6a6a6a" stroke-width="1"/></svg>
<svg style="left:903px;top:736px" width="16" height="15" viewBox="903 736 16 15"><path d="M904.6 737.6h13v12h-13z" fill="none" stroke="#6a6a6a" stroke-width="1.3"/><path d="M904.6 744.500H912.200V737.600 M908.500 737.600V744.500" fill="none" stroke="#6a6a6a" stroke-width="1.1"/></svg>
<div style="left:935px;top:743px;width:6px;height:2px;background:#555"></div>
<div style="left:945px;top:744px;width:100px;height:1px;background:#9a9a9a"></div>
<div style="left:993px;top:738px;width:4px;height:11px;background:#555"></div>
<div style="left:1049px;top:743px;width:8px;height:2px;background:#555"></div><div style="left:1052px;top:740px;width:2px;height:8px;background:#555"></div>
<div style="left:1073px;top:737px;font-size:10.5px;line-height:14px;color:#444">100%</div>
<svg style="left:31.7px;top:216.5px" width="75.9" height="292.4"><rect x="3" y="3" width="69.9" height="286.4" rx="17" ry="17" fill="none" stroke="#fb3b41" stroke-width="3.2"/></svg>
<svg style="left:554.5px;top:214.3px" width="75.5" height="292.9"><rect x="3" y="3" width="69.5" height="286.9" rx="17" ry="17" fill="none" stroke="#fb3b41" stroke-width="3.2"/></svg>
<svg style="left:900.6px;top:213.6px" width="74.9" height="292.1"><rect x="3" y="3" width="68.9" height="286.1" rx="17" ry="17" fill="none" stroke="#fb3b41" stroke-width="3.2"/></svg>
<svg style="left:973.8px;top:212.7px" width="97.0" height="292.4"><rect x="3" y="3" width="91.0" height="286.4" rx="17" ry="17" fill="none" stroke="#fb3b41" stroke-width="3.2"/></svg>
<svg style="left:86px;top:221px" width="237" height="142" viewBox="0 0 237 142"><defs><filter id="f107" x="-10%" y="-10%" width="125%" height="125%"><feGaussianBlur in="SourceAlpha" stdDeviation="2.4"/><feOffset dx="0.3" dy="3"/><feComponentTransfer><feFuncA type="linear" slope="0.62"/></feComponentTransfer><feMerge><feMergeNode/><feMergeNode in="SourceGraphic"/></feMerge></filter></defs><path d="M27.4 71.8 L44.5 71.8 L16.1 16.5 L58.5 71.8 L215.8 71.8 Q221.3 71.8 221.3 77.3 L221.3 120.9 Q221.3 126.4 215.8 126.4 L27.4 126.4 Q21.9 126.4 21.9 120.9 L21.9 77.3 Q21.9 71.8 27.4 71.8 Z" fill="#fff" stroke="#a6a6a6" stroke-width="2.6" stroke-linejoin="round" filter="url(#f107)"/></svg>
<div class="call" style="left:107.9px;width:199.4px;top:309.0px;transform:scaleX(1.013)">1. Add some tasks</div>
<svg style="left:332px;top:236px" width="244" height="130" viewBox="0 0 244 130"><defs><filter id="f348" x="-10%" y="-10%" width="125%" height="125%"><feGaussianBlur in="SourceAlpha" stdDeviation="2.4"/><feOffset dx="0.3" dy="3"/><feComponentTransfer><feFuncA type="linear" slope="0.62"/></feComponentTransfer><feMerge><feMergeNode/><feMergeNode in="SourceGraphic"/></feMerge></filter></defs><path d="M22.4 60.5 L169.5 60.5 L228.5 16.9 L196.5 60.5 L210.5 60.5 Q216 60.5 216 66.0 L216 108.7 Q216 114.2 210.5 114.2 L22.4 114.2 Q16.9 114.2 16.9 108.7 L16.9 66.0 Q16.9 60.5 22.4 60.5 Z" fill="#fff" stroke="#a6a6a6" stroke-width="2.6" stroke-linejoin="round" filter="url(#f348)"/></svg>
<div class="call" style="left:348.9px;width:199.1px;top:312.4px;transform:scaleX(1.017)">2. Enter estimates</div>
<svg style="left:671px;top:381px" width="242" height="153" viewBox="0 0 242 153"><defs><filter id="f687" x="-10%" y="-10%" width="125%" height="125%"><feGaussianBlur in="SourceAlpha" stdDeviation="2.4"/><feOffset dx="0.3" dy="3"/><feComponentTransfer><feFuncA type="linear" slope="0.62"/></feComponentTransfer><feMerge><feMergeNode/><feMergeNode in="SourceGraphic"/></feMerge></filter></defs><path d="M24.0 59.2 L169 59.2 L226.9 16.4 L193.4 59.2 L206.9 59.2 Q214.9 59.2 214.9 67.2 L214.9 129.4 Q214.9 137.4 206.9 137.4 L24.0 137.4 Q16.0 137.4 16.0 129.4 L16.0 67.2 Q16.0 59.2 24.0 59.2 Z" fill="#fff" stroke="#a6a6a6" stroke-width="2.6" stroke-linejoin="round" filter="url(#f687)"/></svg>
<div class="call" style="left:687.0px;width:198.9px;top:456.0px;transform:scaleX(1.032)">3. Choose which</div>
<div class="call" style="left:687.0px;width:198.9px;top:480.2px;transform:scaleX(1.05)">features form an MVP</div>
<svg style="left:873px;top:487px" width="231" height="149" viewBox="0 0 231 149"><defs><filter id="f889" x="-10%" y="-10%" width="125%" height="125%"><feGaussianBlur in="SourceAlpha" stdDeviation="2.4"/><feOffset dx="0.3" dy="3"/><feComponentTransfer><feFuncA type="linear" slope="0.62"/></feComponentTransfer><feMerge><feMergeNode/><feMergeNode in="SourceGraphic"/></feMerge></filter></defs><path d="M24.3 55.5 L169.5 55.5 L172.7 16.3 L192.6 55.5 L207 55.5 Q215 55.5 215 63.5 L215 125.8 Q215 133.8 207 133.8 L24.3 133.8 Q16.3 133.8 16.3 125.8 L16.3 63.5 Q16.3 55.5 24.3 55.5 Z" fill="#fff" stroke="#a6a6a6" stroke-width="2.6" stroke-linejoin="round" filter="url(#f889)"/></svg>
<div class="call" style="left:889.3px;width:198.7px;top:557.7px;transform:scaleX(1.039)">4. Choose the type of</div>
<div class="call" style="left:889.3px;width:198.7px;top:582.3px;transform:scaleX(1.12)">work</div>
<svg style="left:518px;top:490px" width="18" height="18" viewBox="518 490 18 18"><path id="cr" d="M523.5 491.5h5v4h4v5h-4v4h-5v-4h-4v-5h4z" transform="translate(1.2 1.2)" fill="#000" stroke="#000" stroke-width="1"/><path d="M523.5 491.5h5v4h4v5h-4v4h-5v-4h-4v-5h4z" fill="#fff" stroke="#000" stroke-width="1.2"/></svg>
<div style="left:0;top:0;width:1px;height:756px;background:#217346"></div>
<div style="left:1119px;top:0;width:1px;height:756px;background:#217346"></div>
<div style="left:0;top:755px;width:1120px;height:1px;background:#217346"></div>
</div></body></html>
